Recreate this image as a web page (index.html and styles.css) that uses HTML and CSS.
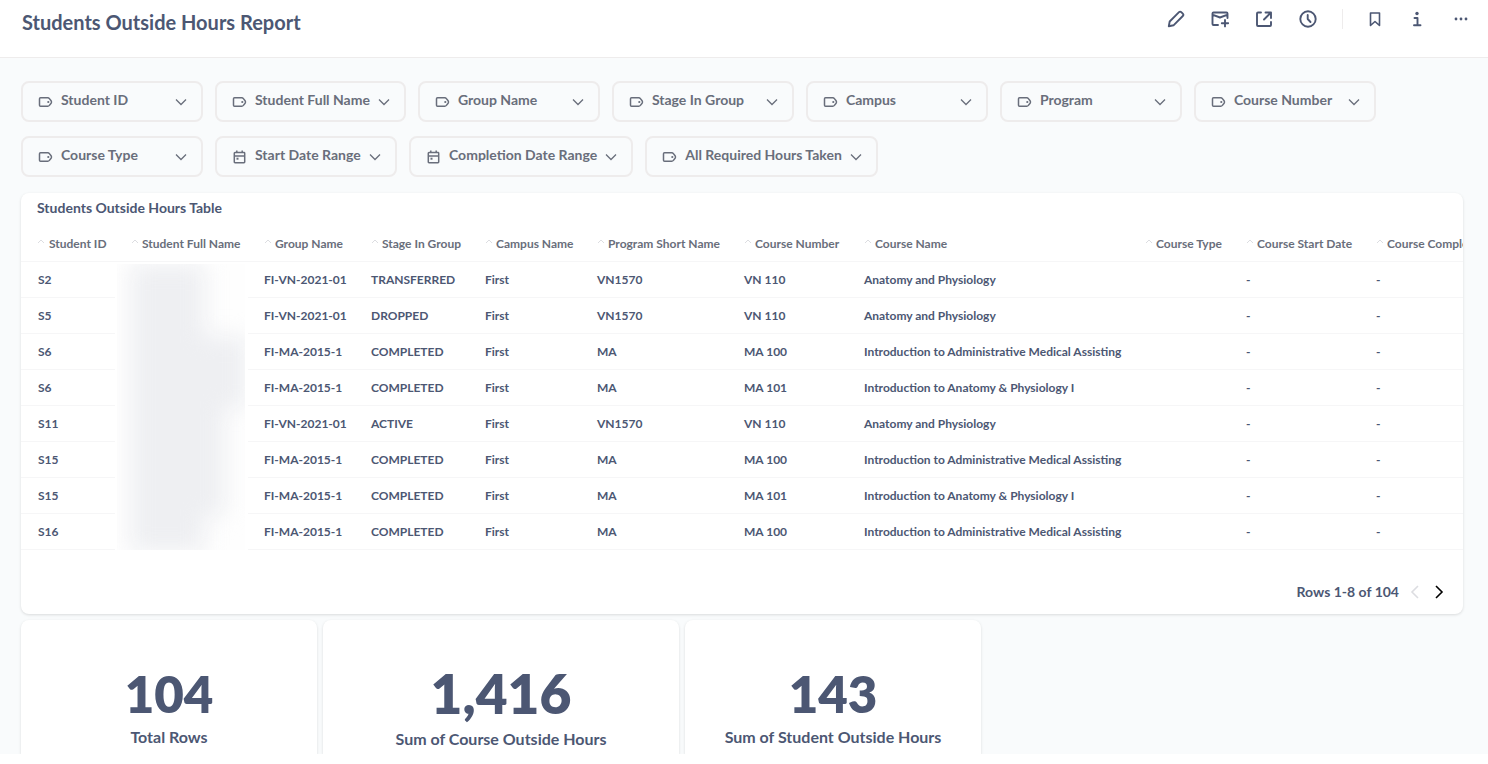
FILE: index.html
```html
<!doctype html>
<html lang="en">
<head>
  <meta charset="utf-8">
  <meta name="viewport" content="width=device-width, initial-scale=1">
  <title>Students Outside Hours Report</title>
<link rel="stylesheet" href="styles.css">
</head>

<body>

<!-- icons -->
<svg class="hidden">
  <symbol id="i-tag" viewBox="0 0 14 14">
    <path d="M2 2.800h7.300c.7 0 1.200.3 1.600.8l1.700 2.200c.5.7.5 1.700 0 2.400l-1.700 2.200c-.4.5-.9.8-1.600.8H2c-.6 0-1-.4-1-1V3.800c0-.6.4-1 1-1z" fill="none" stroke="currentColor" stroke-width="1.500"/>
    <circle cx="9.800" cy="7" r="1.100" fill="currentColor"/>
  </symbol>
  <symbol id="i-calendar" viewBox="0 0 14 14">
    <path d="M2.500 2.500h9c.4 0 .7.3.7.7v8.800c0 .4-.3.700-.7.700h-9c-.4 0-.7-.3-.7-.7V3.200c0-.4.3-.7.700-.7zM2 6h10M4.300.5v2M9.700.5v2" fill="none" stroke="currentColor" stroke-width="1.500"/>
    <path d="M4 7.700h2v2H4z" fill="currentColor"/>
  </symbol>
  <symbol id="i-down" viewBox="0 0 12 12">
    <path d="M1 3.500l5 5 5-5" fill="none" stroke="currentColor" stroke-width="1.300"/>
  </symbol>
  <symbol id="i-sort" viewBox="0 0 8 8">
    <path d="M1 5l3-3 3 3" fill="none" stroke="currentColor"/>
  </symbol>
</svg>

<div id="header">
  <h1>Students Outside Hours Report</h1>
  <div class="actions">
    <button aria-label="Edit"><svg viewBox="0 0 18 18"><path d="M1.800 16.200l.9-4.700L12 2.200c.7-.7 1.600-.7 2.300 0l1.500 1.500c.7.7.7 1.600 0 2.300L6.500 15.300z"/></svg></button>
    <button aria-label="Subscriptions"><svg viewBox="0 0 18 18"><path d="M7 15H2.500c-.6 0-1-.4-1-1V3.500c0-.6.4-1 1-1h13c.6 0 1 .4 1 1V8M2 4.800l7 2.700 7-2.700M14 10v6.400M10.800 13.200h6.400"/></svg></button>
    <button aria-label="Share"><svg viewBox="0 0 18 18"><path d="M6 2.500H3c-.6 0-1 .4-1 1V15c0 .6.4 1 1 1h12c.6 0 1-.4 1-1v-3M10.500 2.500H16V8M15.500 3L9 9.500"/></svg></button>
    <button aria-label="History"><svg viewBox="0 0 18 18"><circle cx="9" cy="9" r="7.700"/><path d="M8.700 5V9l2.800 3"/></svg></button>
    <span class="divider"></span>
    <button aria-label="Bookmark"><svg class="narrow" viewBox="0 0 14 18"><path d="M2.500 3h9v12.500L7 11.500l-4.500 4z"/></svg></button>
    <button aria-label="Info"><svg viewBox="0 0 18 18"><path d="M6.500 8h3v7M6 15.300h6.500"/><circle class="dot" cx="9" cy="3.500" r="1.700"/></svg></button>
    <button aria-label="More"><svg viewBox="0 0 18 18"><circle class="dot" cx="4" cy="9" r="1.400"/><circle class="dot" cx="9" cy="9" r="1.400"/><circle class="dot" cx="14" cy="9" r="1.400"/></svg></button>
  </div>
</div>

<div id="dashboard">

  <div id="filters">
    <button><svg><use href="#i-tag"/></svg><span>Student ID</span><svg class="down"><use href="#i-down"/></svg></button>
    <button><svg><use href="#i-tag"/></svg><span>Student Full Name</span><svg class="down"><use href="#i-down"/></svg></button>
    <button><svg><use href="#i-tag"/></svg><span>Group Name</span><svg class="down"><use href="#i-down"/></svg></button>
    <button><svg><use href="#i-tag"/></svg><span>Stage In Group</span><svg class="down"><use href="#i-down"/></svg></button>
    <button><svg><use href="#i-tag"/></svg><span>Campus</span><svg class="down"><use href="#i-down"/></svg></button>
    <button><svg><use href="#i-tag"/></svg><span>Program</span><svg class="down"><use href="#i-down"/></svg></button>
    <button><svg><use href="#i-tag"/></svg><span>Course Number</span><svg class="down"><use href="#i-down"/></svg></button>
    <button><svg><use href="#i-tag"/></svg><span>Course Type</span><svg class="down"><use href="#i-down"/></svg></button>
    <button><svg><use href="#i-calendar"/></svg><span>Start Date Range</span><svg class="down"><use href="#i-down"/></svg></button>
    <button><svg><use href="#i-calendar"/></svg><span>Completion Date Range</span><svg class="down"><use href="#i-down"/></svg></button>
    <button><svg><use href="#i-tag"/></svg><span>All Required Hours Taken</span><svg class="down"><use href="#i-down"/></svg></button>
  </div>

  <div class="card table-card">
    <h2>Students Outside Hours Table</h2>
    <div class="table-wrap">
      <table>
        <colgroup>
          <col class="c-id"><col class="c-name"><col class="c-group"><col class="c-stage"><col class="c-campus"><col class="c-program"><col class="c-number"><col class="c-course"><col class="c-type"><col class="c-start"><col class="c-end">
        </colgroup>
        <thead>
          <tr>
            <th><svg><use href="#i-sort"/></svg>Student ID</th>
            <th><svg><use href="#i-sort"/></svg>Student Full Name</th>
            <th><svg><use href="#i-sort"/></svg>Group Name</th>
            <th><svg><use href="#i-sort"/></svg>Stage In Group</th>
            <th><svg><use href="#i-sort"/></svg>Campus Name</th>
            <th><svg><use href="#i-sort"/></svg>Program Short Name</th>
            <th><svg><use href="#i-sort"/></svg>Course Number</th>
            <th><svg><use href="#i-sort"/></svg>Course Name</th>
            <th><svg><use href="#i-sort"/></svg>Course Type</th>
            <th><svg><use href="#i-sort"/></svg>Course Start Date</th>
            <th><svg><use href="#i-sort"/></svg>Course Completion Date</th>
          </tr>
        </thead>
        <tbody>
          <tr>
            <td>S2</td>
            <!-- student names are hidden -->
            <td class="names" rowspan="8"><div class="redacted"><div class="blur"><i class="short"></i><i class="short"></i><i class="long"></i><i class="long"></i><i></i><i></i><i></i><i class="short"></i></div></div></td>
            <td>FI-VN-2021-01</td><td>TRANSFERRED</td><td>First</td><td>VN1570</td><td>VN 110</td><td>Anatomy and Physiology</td><td></td><td>-</td><td>-</td>
          </tr>
          <tr><td>S5</td><td>FI-VN-2021-01</td><td>DROPPED</td><td>First</td><td>VN1570</td><td>VN 110</td><td>Anatomy and Physiology</td><td></td><td>-</td><td>-</td></tr>
          <tr><td>S6</td><td>FI-MA-2015-1</td><td>COMPLETED</td><td>First</td><td>MA</td><td>MA 100</td><td>Introduction to Administrative Medical Assisting</td><td></td><td>-</td><td>-</td></tr>
          <tr><td>S6</td><td>FI-MA-2015-1</td><td>COMPLETED</td><td>First</td><td>MA</td><td>MA 101</td><td>Introduction to Anatomy &amp; Physiology I</td><td></td><td>-</td><td>-</td></tr>
          <tr><td>S11</td><td>FI-VN-2021-01</td><td>ACTIVE</td><td>First</td><td>VN1570</td><td>VN 110</td><td>Anatomy and Physiology</td><td></td><td>-</td><td>-</td></tr>
          <tr><td>S15</td><td>FI-MA-2015-1</td><td>COMPLETED</td><td>First</td><td>MA</td><td>MA 100</td><td>Introduction to Administrative Medical Assisting</td><td></td><td>-</td><td>-</td></tr>
          <tr><td>S15</td><td>FI-MA-2015-1</td><td>COMPLETED</td><td>First</td><td>MA</td><td>MA 101</td><td>Introduction to Anatomy &amp; Physiology I</td><td></td><td>-</td><td>-</td></tr>
          <tr><td>S16</td><td>FI-MA-2015-1</td><td>COMPLETED</td><td>First</td><td>MA</td><td>MA 100</td><td>Introduction to Administrative Medical Assisting</td><td></td><td>-</td><td>-</td></tr>
        </tbody>
      </table>
    </div>
    <div class="pager">
      <span>Rows 1-8 of 104</span>
      <button aria-label="Previous page" disabled><svg viewBox="0 0 16 16"><path d="M11 2L5 8l6 6"/></svg></button>
      <button aria-label="Next page"><svg viewBox="0 0 16 16"><path d="M5 2l6 6-6 6"/></svg></button>
    </div>
  </div>

  <div class="totals">
    <div class="card total">
      <div class="value">104</div>
      <h3>Total Rows</h3>
    </div>
    <div class="card total wide">
      <div class="value">1,416</div>
      <h3>Sum of Course Outside Hours</h3>
    </div>
    <div class="card total">
      <div class="value">143</div>
      <h3>Sum of Student Outside Hours</h3>
    </div>
  </div>

</div><!-- /#dashboard -->

</body>
</html>
```
FILE: styles.css
```css
*, *:before, *:after {
  box-sizing: border-box;
}

body {
  margin: 0;
  font-family: 'Lato', sans-serif;
  font-weight: 700;
  color: #4c5773;
  background-color: #fff;
}

button {
  font: inherit;
  color: inherit;
  background: none;
  border: 0;
  padding: 0;
  cursor: pointer;
}

svg {
  display: block;
  flex: none;
}

h1, h2, h3 {
  margin: 0;
  font-weight: 700;
}

.hidden {
  display: none;
}

#header {
  display: flex;
  justify-content: space-between;
  align-items: flex-start;
  height: 58px;
  padding: 9px 18px 0 22px;
  border-bottom: 1px solid #eeecec;
}

h1 {
  font-size: 20px;
  line-height: 27px;
}

.actions {
  display: flex;
  align-items: center;
  gap: 26px;
}

.actions svg {
  width: 18px;
  height: 18px;
  fill: none;
  stroke: currentColor;
  stroke-width: 1.9;
  stroke-linecap: round;
  stroke-linejoin: round;
}

.actions .narrow {
  width: 14px;
  stroke-width: 1.6;
}

.actions .dot {
  fill: currentColor;
  stroke: none;
}

.divider {
  width: 1px;
  height: 20px;
  margin: 0 -1px;
  background-color: #eeecec;
}

#dashboard {
  padding: 23px 25px 0 21px;
  background-color: #f9fbfc;
}

#filters {
  display: flex;
  flex-wrap: wrap;
  gap: 14px 12px;
  margin-bottom: 16px;
}

#filters button {
  display: flex;
  align-items: center;
  gap: 8px;
  min-width: 182px;
  height: 41px;
  padding: 0 14px 0 15px;
  border: 2px solid #eeecec;
  border-radius: 8px;
  font-size: 14px;
  line-height: 20px;
  color: #696e7b;
}

#filters span {
  padding-bottom: 3px;
}

#filters svg {
  width: 15px;
  height: 14px;
}

#filters .down {
  width: 12px;
  height: 12px;
  margin-left: auto;
}

.card {
  background-color: #fff;
  border-radius: 8px;
  box-shadow: 0 1px 3px rgba(0, 0, 0, 0.13);
}

.table-card {
  overflow: hidden;
}

h2 {
  padding: 6px 16px 0;
  font-size: 14px;
  line-height: 18px;
}

.table-wrap {
  overflow: hidden;
  margin-top: 8px;
}

table {
  table-layout: fixed;
  width: 1509px;
  border-collapse: separate;
  border-spacing: 0;
  font-size: 12px;
  line-height: 16px;
}

.c-id { width: 94px; }
.c-name { width: 133px; }
.c-group { width: 107px; }
.c-stage { width: 114px; }
.c-campus { width: 112px; }
.c-program { width: 147px; }
.c-number { width: 120px; }
.c-course { width: 281px; }
.c-type { width: 101px; }
.c-start { width: 130px; }
.c-end { width: 170px; }

th, td {
  height: 36px;
  padding: 0 0 0 16px;
  border-bottom: 1px solid #f6f6f7;
  text-align: left;
  white-space: nowrap;
}

td:first-child {
  padding-left: 17px;
}

th {
  height: 37px;
  padding-top: 2px;
  color: #696e7b;
}

th svg {
  display: inline-block;
  width: 8px;
  height: 8px;
  margin-right: 3px;
  vertical-align: 2px;
  color: #dcdde1;
}

th:first-child svg {
  margin-right: 4px;
}

td.names {
  padding: 2px 3px 0 2px;
  border-bottom: 0;
}

.redacted {
  height: 286px;
  padding-left: 14px;
  overflow: hidden;
  background-color: #fefefe;
}

.blur {
  filter: blur(11px);
}

.blur i {
  display: block;
  width: 94px;
  height: 36px;
  background-color: #eeeff2;
}

.blur .short {
  width: 74px;
}

.blur .long {
  width: 116px;
}

.pager {
  display: flex;
  justify-content: flex-end;
  align-items: center;
  gap: 8px;
  padding: 32px 16px 12px;
  font-size: 14px;
  line-height: 20px;
}

.pager svg {
  width: 16px;
  height: 16px;
  fill: none;
  stroke: #000;
  stroke-width: 1.6;
}

.pager button:disabled svg {
  stroke: #dcdde1;
}

.totals {
  display: flex;
  gap: 6px;
  margin-top: 6px;
}

.total {
  width: 296px;
  padding: 44px 0 3px;
  border-radius: 8px 8px 0 0;
  box-shadow: 0 1px 3px rgba(0, 0, 0, 0.13);
  clip-path: inset(-3px -3px 0 -3px);
  text-align: center;
}

.total.wide {
  width: 356px;
}

.value {
  font-size: 51px;
  line-height: 60px;
  font-weight: 800;
}

.wide .value {
  font-size: 55px;
  line-height: 58px;
  margin-bottom: 4px;
}

h3 {
  font-size: 16px;
  line-height: 25px;
}
```
